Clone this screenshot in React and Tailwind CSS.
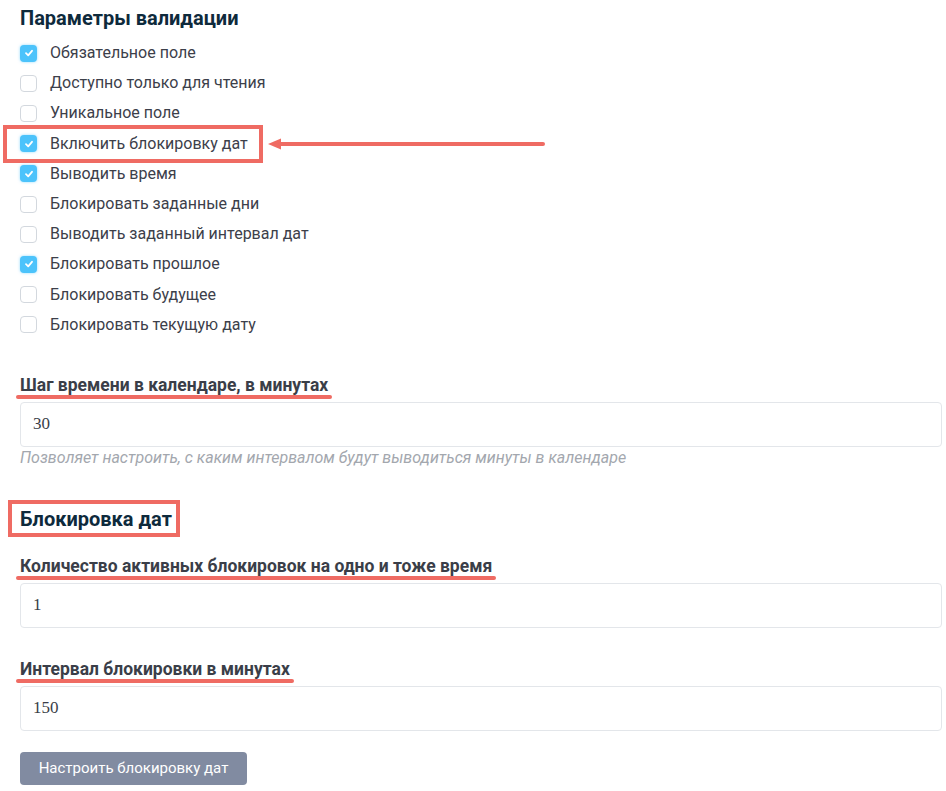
import React from "react";

const options = [
  { label: "Обязательное поле", checked: true },
  { label: "Доступно только для чтения", checked: false },
  { label: "Уникальное поле", checked: false },
  { label: "Включить блокировку дат", checked: true, marked: true },
  { label: "Выводить время", checked: true },
  { label: "Блокировать заданные дни", checked: false },
  { label: "Выводить заданный интервал дат", checked: false },
  { label: "Блокировать прошлое", checked: true },
  { label: "Блокировать будущее", checked: false },
  { label: "Блокировать текущую дату", checked: false },
];

function Checkbox({ checked }) {
  if (!checked) {
    return <span className="w-[17px] h-[17px] rounded-[4px] border border-[#d3d8de] bg-white shrink-0" />;
  }
  return (
    <span className="w-[17px] h-[17px] rounded-[4px] bg-[#4cc3fb] shadow-[0_0_3px_rgba(76,195,251,0.6)] flex items-center justify-center shrink-0">
      <svg width="10" height="10" viewBox="0 0 10 10">
        <path d="M2 5.2 L4.2 7.3 L8 2.8" fill="none" stroke="white" strokeWidth="1.8" strokeLinecap="round" strokeLinejoin="round" />
      </svg>
    </span>
  );
}

function Underlined({ children }) {
  return (
    <span className="relative inline-block">
      {children}
      <span className="absolute -left-[4px] -right-[4px] -bottom-[2px] h-[4px] rounded-full bg-[#ef6b63]" />
    </span>
  );
}

function Field({ label, value, help, className = "" }) {
  return (
    <div className={className}>
      <div className="h-[24px] leading-[24px] text-[17.5px] font-bold text-[#3a3e48] mb-[5px] whitespace-nowrap">
        <Underlined>{label}</Underlined>
      </div>
      <input
        readOnly
        defaultValue={value}
        className="w-full h-[45px] rounded-[4px] border border-[#e3e6ea] bg-white px-3 text-[17px] text-[#3a3e48] outline-none"
        style={{ fontFamily: "'Liberation Serif', serif" }}
      />
      {help && (
        <div className="mt-px leading-[20px] text-[16px] italic text-[#a3a7ae]">{help}</div>
      )}
    </div>
  );
}

export default function App() {
  return (
    <div className="min-h-screen bg-white px-5 pr-1 pt-[4px] font-['Roboto',sans-serif]">
      <h2 className="text-[20px] leading-[28px] font-bold text-[#0e2a3c]">Параметры валидации</h2>

      <div className="mt-[6px]">
        {options.map((o, i) => (
          <div key={i} className="h-[30.2px] flex items-center">
            <div className="relative inline-flex items-center gap-[13px] h-full">
              <Checkbox checked={o.checked} />
              <span className="text-[16px] text-[#3c404a]">{o.label}</span>
              {o.marked && (
                <>
                  <span className="absolute -left-[17px] -right-[15px] -top-[4px] -bottom-[4px] border-[4px] border-[#ef6b63]" />
                  <svg className="absolute left-[248px] top-[9px]" width="278" height="12" viewBox="0 0 278 12">
                    <path d="M0 6 L13 0.5 L13 11.5 Z" fill="#ef6b63" />
                    <line x1="12" y1="6" x2="275" y2="6" stroke="#ef6b63" strokeWidth="4" strokeLinecap="round" />
                  </svg>
                </>
              )}
            </div>
          </div>
        ))}
      </div>

      <Field
        className="mt-[33px]"
        label="Шаг времени в календаре, в минутах"
        value="30"
        help="Позволяет настроить, с каким интервалом будут выводиться минуты в календаре"
      />

      <div className="mt-[37px]">
        <h2 className="relative inline-block text-[20px] leading-[28px] font-bold text-[#0e2a3c]">
          Блокировка дат
          <span className="absolute -left-[12px] -right-[8px] -top-[5px] -bottom-[4px] border-[4px] border-[#ef6b63]" />
        </h2>
      </div>

      <Field className="mt-[21px]" label="Количество активных блокировок на одно и тоже время" value="1" />

      <Field className="mt-[29px]" label="Интервал блокировки в минутах" value="150" />

      <button className="mt-[21px] h-[33px] w-[227px] rounded-[4px] bg-[#818ba1] text-white text-[15px]">
        Настроить блокировку дат
      </button>
    </div>
  );
}
